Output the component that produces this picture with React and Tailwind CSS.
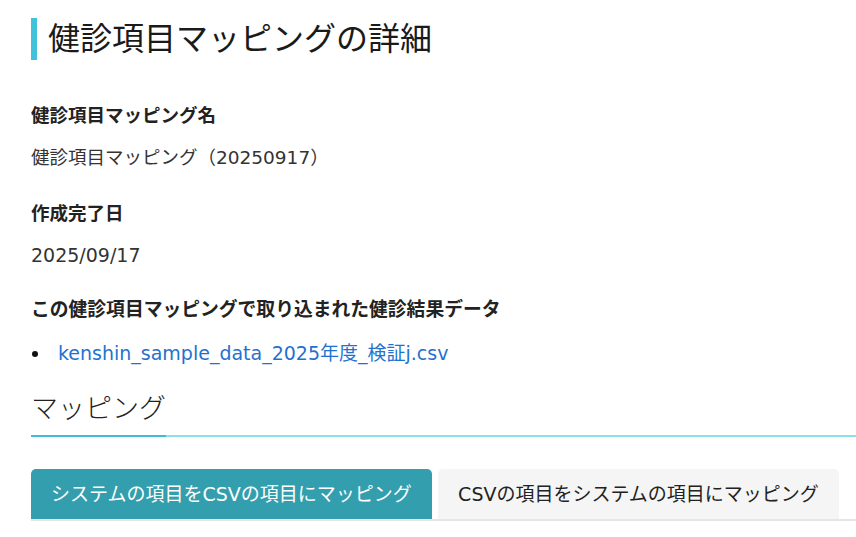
import React, { useState } from "react";

const font = { fontFamily: '"DejaVu Sans", "Noto Sans CJK JP", sans-serif' };

const MappingDetail = () => {
  const [tab, setTab] = useState(0);

  const tabs = [
    "システムの項目をCSVの項目にマッピング",
    "CSVの項目をシステムの項目にマッピング",
  ];

  return (
    <div className="min-h-screen bg-white pl-[31px] text-[#222]" style={font}>
      <h1 className="mt-[18px] border-l-[6px] border-[#3fc2da] pl-[11px] text-[32px] leading-[42px] font-normal text-[#1a1a1a]">
        健診項目マッピングの詳細
      </h1>

      {/* Name */}
      <h3 className="mt-[42px] text-[18.5px] leading-[27px] font-bold">
        健診項目マッピング名
      </h3>
      <p className="mt-[15px] text-[18.5px] leading-[27px] text-[#333]">
        健診項目マッピング（20250917）
      </p>

      {/* Date */}
      <h3 className="mt-[29px] text-[18.5px] leading-[27px] font-bold">
        作成完了日
      </h3>
      <p className="mt-[15px] text-[19px] leading-[27px] text-[#333]">
        2025/09/17
      </p>

      {/* Imported files */}
      <h3 className="mt-[27px] text-[18.8px] leading-[27px] font-bold">
        この健診項目マッピングで取り込まれた健診結果データ
      </h3>
      <ul className="mt-[17px]">
        <li className="flex items-center gap-[20px] pl-[1px] text-[19px] leading-[27px]">
          <span className="h-[6px] w-[6px] rounded-full bg-[#111]" />
          <a href="#" className="text-[#1f72cf]">
            kenshin_sample_data_2025年度_検証j.csv
          </a>
        </li>
      </ul>

      {/* Mapping */}
      <h2 className="mt-[24px] pb-[8px] text-[27px] leading-[36px] font-light text-[#222]">
        マッピング
      </h2>
      <div className="h-[2px] bg-[#8adfe9]">
        <div className="h-full w-[135px] bg-[#3fbcd6]" />
      </div>

      <div className="mt-[32px] flex gap-[6px] border-b-2 border-[#e6e6e6]">
        {tabs.map((label, i) => (
          <button
            key={label}
            onClick={() => setTab(i)}
            className={`h-[50px] w-[401px] rounded-t-[5px] text-[19px] ${
              tab === i ? "bg-[#339ead] text-white" : "bg-[#f5f5f5] text-[#222]"
            }`}
          >
            {label}
          </button>
        ))}
      </div>
    </div>
  );
};

export default MappingDetail;
